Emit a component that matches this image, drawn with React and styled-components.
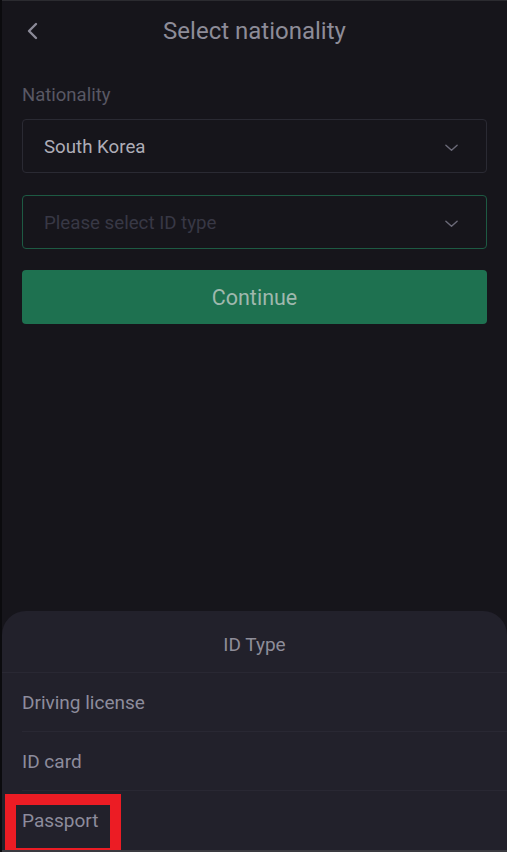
import styled, { createGlobalStyle } from 'styled-components';

const GlobalStyle = createGlobalStyle`
  html, body {
    margin: 0;
    padding: 0;
    background: #0b0b0e;
  }
  * {
    box-sizing: border-box;
  }
`;

const Screen = styled.div`
  position: relative;
  height: 852px;
  margin-left: 2px;
  width: 505px;
  display: flex;
  flex-direction: column;
  background: #16151b;
  border-top: 1px solid #2b2b30;
  border-bottom: 2px solid #3a3a40;
  font-family: Roboto, 'Noto Sans', sans-serif;
  overflow: hidden;
`;

const Header = styled.div`
  position: relative;
  height: 60px;
  display: flex;
  align-items: center;
  justify-content: center;
`;

const BackButton = styled.button`
  position: absolute;
  left: 19px;
  top: 50%;
  transform: translateY(-50%);
  background: none;
  border: none;
  padding: 4px;
  display: flex;
  color: #8b8a98;
  cursor: pointer;
`;

const Title = styled.h1`
  margin: 0;
  font-size: 24px;
  font-weight: 400;
  color: #8d8c98;
`;

const Form = styled.div`
  display: flex;
  flex-direction: column;
  padding: 23px 20px 0 20px;
`;

const Label = styled.div`
  font-size: 18.5px;
  color: #595864;
  margin-bottom: 13px;
`;

const Select = styled.div`
  height: 54px;
  display: flex;
  align-items: center;
  justify-content: space-between;
  padding: 2px 27px 0 21px;
  border: 1px solid ${(props) => (props.active ? '#1d5a43' : '#2a2a33')};
  border-radius: 4px;
  margin-bottom: ${(props) => (props.active ? '21px' : '22px')};
`;

const SelectText = styled.span`
  font-size: 18.7px;
  color: ${(props) => (props.placeholder ? '#383845' : '#aeadb7')};
`;

const Chevron = styled.svg`
  width: 15px;
  height: 15px;
  color: #6b6a78;
`;

const ContinueButton = styled.button`
  height: 54px;
  border: none;
  border-radius: 4px;
  background: #1e7150;
  color: #9fb8ad;
  font-family: inherit;
  font-size: 21.5px;
`;

const Sheet = styled.div`
  margin-top: auto;
  height: 239px;
  background: #22212b;
  border-radius: 24px 24px 0 0;
  display: flex;
  flex-direction: column;
`;

const SheetTitle = styled.div`
  height: 62px;
  padding-top: 5px;
  display: flex;
  align-items: center;
  justify-content: center;
  font-size: 19px;
  color: #8e8d99;
  border-bottom: 1px solid #292833;
`;

const Option = styled.div`
  height: 59px;
  display: flex;
  align-items: center;
  margin-left: 20px;
  font-size: 19px;
  color: #8d8c9c;
  border-bottom: ${(props) => (props.last ? 'none' : '1px solid #292833')};
`;

const Highlight = styled.div`
  position: absolute;
  left: 3px;
  bottom: -1px;
  width: 116px;
  height: 57px;
  border: 11px solid #ec1c24;
  border-bottom-width: 3px;
  pointer-events: none;
`;

const ChevronDown = () => (
  <Chevron viewBox="0 0 16 16" fill="none">
    <path d="M2 5.5L8 11L14 5.5" stroke="currentColor" strokeWidth="1.5" strokeLinecap="round" strokeLinejoin="round" />
  </Chevron>
);

const options = ['Driving license', 'ID card', 'Passport'];

const App = () => {
  return (
    <>
      <GlobalStyle />
      <Screen>
        <Header>
          <BackButton aria-label="Back">
            <svg width="16" height="20" viewBox="0 0 16 20" fill="none">
              <path d="M11 3L4 10L11 17" stroke="currentColor" strokeWidth="2.4" strokeLinecap="round" strokeLinejoin="round" />
            </svg>
          </BackButton>
          <Title>Select nationality</Title>
        </Header>
        <Form>
          <Label>Nationality</Label>
          <Select>
            <SelectText>South Korea</SelectText>
            <ChevronDown />
          </Select>
          <Select active>
            <SelectText placeholder>Please select ID type</SelectText>
            <ChevronDown />
          </Select>
          <ContinueButton>Continue</ContinueButton>
        </Form>
        <Sheet>
          <SheetTitle>ID Type</SheetTitle>
          {options.map((o, i) => (
            <Option key={o} last={i === options.length - 1}>
              {o}
            </Option>
          ))}
        </Sheet>
        <Highlight />
      </Screen>
    </>
  );
};

export default App;
